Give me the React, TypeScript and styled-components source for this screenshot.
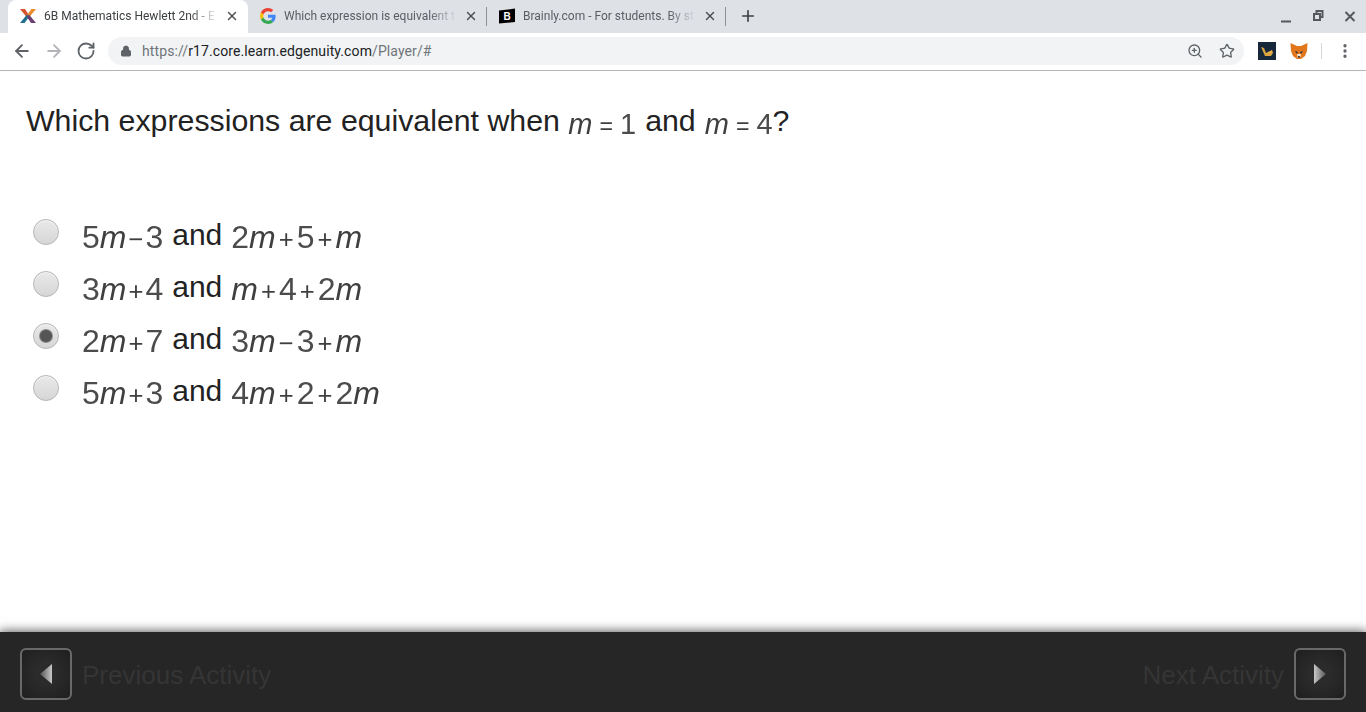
import React from "react";
import styled, { createGlobalStyle } from "styled-components";
import { ArrowLeft, ArrowRight, Lock, MoreVertical, Plus, RotateCw, Star, X, ZoomIn } from "lucide-react";

const GlobalStyle = createGlobalStyle`
    html, body {
        margin: 0;
        padding: 0;
        height: 100%;
        overflow: hidden;
        background: #fff;
        font-family: "Liberation Sans", Arial, sans-serif;
    }
`;

const Page = styled.div`
    display: flex;
    flex-direction: column;
    height: 100vh;
`;

// browser chrome
const TabStrip = styled.div`
    display: flex;
    align-items: flex-end;
    height: 33px;
    padding-left: 8px;
    background: #dee1e6;
    flex-shrink: 0;
`;

const Tab = styled.div<{ $active?: boolean; $divider?: boolean }>`
    position: relative;
    display: flex;
    align-items: center;
    width: ${p => (p.$active ? 240 : 239)}px;
    height: 33px;
    box-sizing: border-box;
    padding: 0 8px 1px 12px;
    border-radius: 8px 8px 0 0;
    background: ${p => (p.$active ? "#fff" : "transparent")};
    color: ${p => (p.$active ? "#3c4043" : "#5a5e63")};
    ${p => p.$divider && `
        &::after {
            content: "";
            position: absolute;
            right: 0;
            top: 7px;
            width: 1px;
            height: 19px;
            background: #8d9094;
        }
    `}
`;

const Favicon = styled.svg`
    width: 16px;
    height: 16px;
    flex-shrink: 0;
    margin-right: 8px;
`;

const TabTitle = styled.span`
    flex: 1;
    min-width: 0;
    overflow: hidden;
    white-space: nowrap;
    font: 12px Roboto, "Liberation Sans", sans-serif;
    -webkit-mask-image: linear-gradient(to right, #000 84%, transparent 100%);
    mask-image: linear-gradient(to right, #000 84%, transparent 100%);
`;

const TabClose = styled(X)`
    width: 14px;
    height: 14px;
    flex-shrink: 0;
    margin: 0 1px 0 7px;
    stroke-width: 2.4;
    color: #4a4d51;
`;

const NewTab = styled(Plus)`
    width: 18px;
    height: 18px;
    margin: 0 0 8px 13px;
    stroke-width: 2.2;
    color: #3c4043;
`;

const WindowControls = styled.div`
    display: flex;
    align-items: center;
    gap: 12px;
    margin: 0 6px 7px auto;
`;

const WindowIcon = styled.svg`
    width: 20px;
    height: 20px;
    fill: none;
    stroke: #55585c;
    stroke-width: 2;
`;

const Toolbar = styled.div`
    display: flex;
    align-items: center;
    height: 36px;
    padding-bottom: 1px;
    box-sizing: content-box;
    border-bottom: 1px solid #b4b4b4;
    background: #fff;
    flex-shrink: 0;
`;

const NavButtons = styled.div`
    display: flex;
    align-items: center;
    gap: 12px;
    padding: 0 12px;
`;

const NavIcon = styled.span<{ $muted?: boolean }>`
    display: flex;
    color: ${p => (p.$muted ? "#b3b5b8" : "#5f6368")};
    svg {
        width: 20px;
        height: 20px;
        stroke-width: 2.2;
    }
`;

const Omnibox = styled.div`
    display: flex;
    align-items: center;
    width: 1136px;
    height: 28px;
    box-sizing: border-box;
    padding: 0 9px 0 12px;
    border-radius: 14px;
    background: #f1f3f4;
`;

const LockIcon = styled(Lock)`
    width: 12px;
    height: 12px;
    margin-right: 10px;
    fill: #5f6368;
    color: #5f6368;
`;

const Url = styled.div`
    flex: 1;
    font: 14px Roboto, "Liberation Sans", sans-serif;
    letter-spacing: 0.1px;
    color: #70757a;
    b {
        font-weight: 400;
        color: #202124;
    }
`;

const OmniIcon = styled.span`
    display: flex;
    margin-left: 16px;
    color: #5f6368;
    svg {
        width: 16px;
        height: 16px;
        stroke-width: 2;
    }
`;

const Extensions = styled.div`
    display: flex;
    align-items: center;
    flex: 1;
    padding-left: 14px;
`;

const ExtensionIcon = styled.svg`
    width: 18px;
    height: 18px;
    margin-right: 14px;
`;

const ToolbarDivider = styled.span`
    width: 1px;
    height: 16px;
    background: #d5d7da;
    margin-left: -1px;
`;

const MenuIcon = styled(MoreVertical)`
    width: 18px;
    height: 18px;
    margin-left: 14px;
    color: #5f6368;
    stroke-width: 2.4;
`;

// activity content
const Content = styled.main`
    flex: 1;
    padding: 30px 26px 0;
    color: #222;
`;

const Question = styled.div`
    display: flex;
    align-items: baseline;
    height: 40px;
    font-size: 30.3px;
    line-height: 40px;
    white-space: pre;
`;

const OptionList = styled.div`
    display: flex;
    flex-direction: column;
    gap: 12px;
    margin: 73px 0 0 7px;
`;

const OptionRow = styled.label`
    display: flex;
    align-items: flex-start;
    height: 40px;
    font-size: 30px;
    line-height: 40px;
    white-space: pre;
`;

const Radio = styled.span<{ $checked?: boolean }>`
    display: flex;
    align-items: center;
    justify-content: center;
    width: 26px;
    height: 26px;
    box-sizing: border-box;
    margin: 5px 23px 0 0;
    flex-shrink: 0;
    border-radius: 50%;
    border: 1px solid #b4b4b4;
    background: linear-gradient(#e9e9e9, #d6d6d6);
    box-shadow: inset 0 1px 1px #f8f8f8;
    &::after {
        content: "";
        display: ${p => (p.$checked ? "block" : "none")};
        width: 12px;
        height: 12px;
        border-radius: 50%;
        background: #555;
        box-shadow: 0 0 0 1px #8a8a8a;
    }
`;

const OptionText = styled.span`
    display: flex;
    align-items: baseline;
`;

const MathImage = styled.span<{ $size: number; $gap: number }>`
    display: inline-flex;
    align-items: baseline;
    font-size: ${p => p.$size}px;
    color: #4c4c4c;
    filter: blur(0.35px);
    transform: translateY(3px);
    i {
        font-style: italic;
        color: #3f3f3f;
    }
    em {
        font-style: normal;
        margin: 0 ${p => p.$gap}px;
        font-size: 0.8em;
        color: #3f3f3f;
    }
`;

const Word = styled.span`
    margin: 0 9px;
`;

// footer nav
const Footer = styled.footer`
    display: flex;
    align-items: center;
    justify-content: space-between;
    height: 80px;
    padding: 4px 20px 0;
    box-sizing: border-box;
    background: #262626;
    box-shadow: 0 0 10px 1px rgba(0, 0, 0, 0.65);
    flex-shrink: 0;
    position: relative;
`;

const FooterNav = styled.div`
    display: flex;
    align-items: center;
    gap: 10px;
`;

const NavButton = styled.button`
    display: flex;
    align-items: center;
    justify-content: center;
    width: 52px;
    height: 52px;
    padding: 0;
    border: 2px solid #696969;
    border-radius: 6px;
    background: radial-gradient(circle, #2b2b2b 30%, #1f1f1f 100%);
`;

const Triangle = styled.svg`
    width: 14px;
    height: 24px;
    filter: blur(0.6px);
`;

const FooterLabel = styled.span`
    padding-top: 2px;
    font-size: 26px;
    color: #353535;
`;

const Maths = ({ size = 32, gap = 2, children }: { size?: number; gap?: number; children: React.ReactNode }) => (
    <MathImage $size={size} $gap={gap}>{children}</MathImage>
);

const M = () => <i>m</i>;

const options = [
    { left: <>5<M /><em>−</em>3</>, right: <>2<M /><em>+</em>5<em>+</em><M /></> },
    { left: <>3<M /><em>+</em>4</>, right: <><M /><em>+</em>4<em>+</em>2<M /></> },
    { left: <>2<M /><em>+</em>7</>, right: <>3<M /><em>−</em>3<em>+</em><M /></>, checked: true },
    { left: <>5<M /><em>+</em>3</>, right: <>4<M /><em>+</em>2<em>+</em>2<M /></> },
];

export default function App() {
    return (
        <Page>
            <GlobalStyle />
            <TabStrip>
                <Tab $active>
                    <Favicon viewBox="0 0 16 16">
                        <path d="M0 1 L5 1 L9 7 L7 9.500 Z" fill="#d9532c" />
                        <path d="M16 1 L11.500 1 L7 7 L9 9.500 Z" fill="#e98a2b" />
                        <path d="M0 15 L4.500 15 L9 9 L7 6.500 Z" fill="#1f6f8b" />
                        <path d="M16 15 L11 15 L7 9 L9 6.500 Z" fill="#6b3f73" />
                    </Favicon>
                    <TabTitle>6B Mathematics Hewlett 2nd - E</TabTitle>
                    <TabClose />
                </Tab>
                <Tab $divider>
                    <Favicon viewBox="0 0 48 48">
                        <path fill="#EA4335" d="M24 9.500c3.500 0 6.700 1.300 9.100 3.500l6.800-6.800C35.800 2.400 30.300 0 24 0 14.600 0 6.500 5.400 2.600 13.200l7.900 6.100C12.400 13.600 17.700 9.500 24 9.500z" />
                        <path fill="#4285F4" d="M46.900 24.500c0-1.600-.1-3.100-.4-4.500H24v9h12.900c-.6 3-2.200 5.400-4.700 7.100l7.700 6c4.500-4.200 7-10.300 7-17.600z" />
                        <path fill="#FBBC05" d="M10.500 28.700c-.5-1.400-.8-3-.8-4.700s.3-3.300.8-4.700l-7.900-6.100C.9 16.500 0 20.100 0 24s.9 7.500 2.600 10.800l7.900-6.100z" />
                        <path fill="#34A853" d="M24 48c6.500 0 11.900-2.100 15.900-5.800l-7.700-6c-2.100 1.400-4.900 2.300-8.200 2.300-6.300 0-11.600-4.200-13.500-9.800l-7.900 6.100C6.500 42.600 14.600 48 24 48z" />
                    </Favicon>
                    <TabTitle>Which expression is equivalent t</TabTitle>
                    <TabClose />
                </Tab>
                <Tab $divider>
                    <Favicon viewBox="0 0 16 16">
                        <path d="M0 2.500 L16 0.500 V14 L0 15.500 Z" fill="#000" />
                        <text x="8" y="11.500" textAnchor="middle" fontSize="10" fontWeight="700" fill="#fff" fontFamily="Liberation Sans">B</text>
                    </Favicon>
                    <TabTitle>Brainly.com - For students. By st</TabTitle>
                    <TabClose />
                </Tab>
                <NewTab />
                <WindowControls>
                    <WindowIcon viewBox="0 0 20 20"><path d="M5 15.500 H15" /></WindowIcon>
                    <WindowIcon viewBox="0 0 20 20"><path d="M8.500 7.500 V5 H14.500 V11 H12 M6 8 H12 V14 H6 Z" /></WindowIcon>
                    <WindowIcon viewBox="0 0 20 20"><path d="M5.500 6 L14.500 15 M14.500 6 L5.500 15" /></WindowIcon>
                </WindowControls>
            </TabStrip>
            <Toolbar>
                <NavButtons>
                    <NavIcon><ArrowLeft /></NavIcon>
                    <NavIcon $muted><ArrowRight /></NavIcon>
                    <NavIcon><RotateCw /></NavIcon>
                </NavButtons>
                <Omnibox>
                    <LockIcon />
                    <Url>https://<b>r17.core.learn.edgenuity.com</b>/Player/#</Url>
                    <OmniIcon><ZoomIn /></OmniIcon>
                    <OmniIcon><Star /></OmniIcon>
                </Omnibox>
                <Extensions>
                    <ExtensionIcon viewBox="0 0 18 18">
                        <rect width="18" height="18" fill="#16283a" />
                        <path d="M3 5 L6 6 L8 11 H15 L13 14 H7 Z" fill="#d9a441" />
                        <path d="M8 11 L14 8 L15 11 Z" fill="#e8b04a" />
                    </ExtensionIcon>
                    <ExtensionIcon viewBox="0 0 18 18">
                        <path d="M0.500 1 L7 4 H11 L17.500 1 L17 9 L15 14 L11 17 H7 L3 14 L1 9 Z" fill="#e2761b" />
                        <path d="M5 9 L8 10 L7 12 Z M13 9 L10 10 L11 12 Z" fill="#233447" />
                        <path d="M7 12 L11 12 L10.500 15.500 H7.500 Z" fill="#f6e0c8" />
                        <path d="M8 14 H10 L9.500 16 H8.500 Z" fill="#3a2a1e" />
                    </ExtensionIcon>
                    <ToolbarDivider />
                    <MenuIcon />
                </Extensions>
            </Toolbar>
            <Content>
                <Question>
                    Which expressions are equivalent when <Maths size={29} gap={7}><M /><em>=</em>1</Maths><Word>and</Word><Maths size={29} gap={7}><M /><em>=</em>4</Maths>?
                </Question>
                <OptionList>
                    {options.map((option, i) => (
                        <OptionRow key={i}>
                            <Radio $checked={option.checked} />
                            <OptionText>
                                <Maths>{option.left}</Maths>
                                <Word>and</Word>
                                <Maths gap={3}>{option.right}</Maths>
                            </OptionText>
                        </OptionRow>
                    ))}
                </OptionList>
            </Content>
            <Footer>
                <FooterNav>
                    <NavButton>
                        <Triangle viewBox="0 0 14 24">
                            <defs>
                                <linearGradient id="prevFill" x1="0" x2="1" y1="0" y2="0">
                                    <stop offset="0" stopColor="#555" />
                                    <stop offset="1" stopColor="#c8c8c8" />
                                </linearGradient>
                            </defs>
                            <path d="M13 2 V22 L1 12 Z" fill="url(#prevFill)" />
                        </Triangle>
                    </NavButton>
                    <FooterLabel>Previous Activity</FooterLabel>
                </FooterNav>
                <FooterNav>
                    <FooterLabel>Next Activity</FooterLabel>
                    <NavButton>
                        <Triangle viewBox="0 0 14 24">
                            <defs>
                                <linearGradient id="nextFill" x1="0" x2="1" y1="0" y2="0">
                                    <stop offset="0" stopColor="#c8c8c8" />
                                    <stop offset="1" stopColor="#555" />
                                </linearGradient>
                            </defs>
                            <path d="M1 2 V22 L13 12 Z" fill="url(#nextFill)" />
                        </Triangle>
                    </NavButton>
                </FooterNav>
            </Footer>
        </Page>
    );
}
